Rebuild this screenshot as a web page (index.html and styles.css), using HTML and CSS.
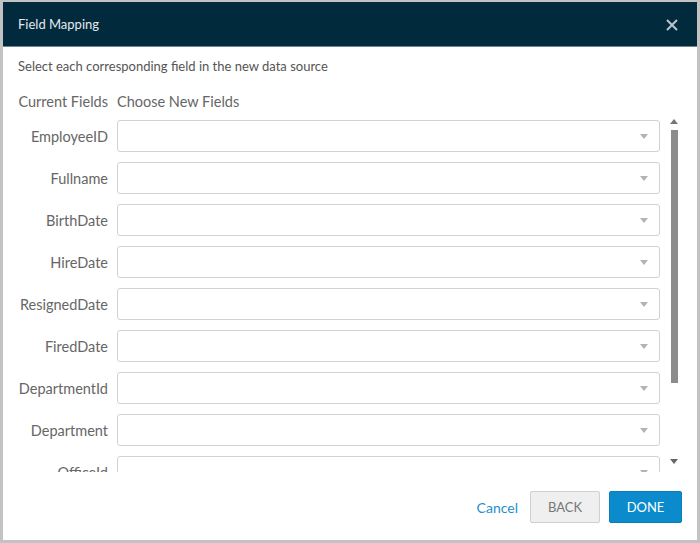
FILE: index.html
```html
<!DOCTYPE html>
<html>
<head>
<meta charset="utf-8">
<link rel="stylesheet" href="styles.css">
</head>
<body>
<div class="dialog">
  <div class="header">
    <span class="title">Field Mapping</span>
    <svg class="close" width="12" height="12" viewBox="0 0 12 12"><path d="M1 1L11 11M11 1L1 11" stroke="#b9c5cc" stroke-width="2" fill="none"/></svg>
  </div>
  <div class="content">
    <p class="desc">Select each corresponding field in the new data source</p>
    <div class="colheads">
      <span class="colhead-left">Current Fields</span>
      <span class="colhead-right">Choose New Fields</span>
    </div>
    <div class="listwrap">
      <div class="list">
        <div class="row"><span class="label">EmployeeID</span><div class="select"><span class="caret"></span></div></div>
        <div class="row"><span class="label">Fullname</span><div class="select"><span class="caret"></span></div></div>
        <div class="row"><span class="label">BirthDate</span><div class="select"><span class="caret"></span></div></div>
        <div class="row"><span class="label">HireDate</span><div class="select"><span class="caret"></span></div></div>
        <div class="row"><span class="label">ResignedDate</span><div class="select"><span class="caret"></span></div></div>
        <div class="row"><span class="label">FiredDate</span><div class="select"><span class="caret"></span></div></div>
        <div class="row"><span class="label">DepartmentId</span><div class="select"><span class="caret"></span></div></div>
        <div class="row"><span class="label">Department</span><div class="select"><span class="caret"></span></div></div>
        <div class="row"><span class="label">OfficeId</span><div class="select"><span class="caret"></span></div></div>
      </div>
      <div class="scrollbar">
        <span class="arrow-up"></span>
        <div class="track"><div class="thumb"></div></div>
        <span class="arrow-down"></span>
      </div>
    </div>
  </div>
  <div class="footer">
    <a class="cancel">Cancel</a>
    <button class="btn btn-back">BACK</button>
    <button class="btn btn-done">DONE</button>
  </div>
</div>
</body>
</html>
```
FILE: styles.css
```css
* { box-sizing: border-box; }
html, body { margin: 0; padding: 0; background: #fff; }
body { font-family: "Lato", "Open Sans", sans-serif; }

.dialog {
  width: 700px;
  height: 543px;
  border-style: solid;
  border-color: #c3c3c3;
  border-width: 2px 3px 3px 3px;
  display: flex;
  flex-direction: column;
  background: #fff;
}

.header {
  height: 45px;
  background: #022a3d;
  border-bottom: 1px solid #6f8491;
  display: flex;
  align-items: center;
  justify-content: space-between;
  padding: 0 19px 0 15px;
  flex-shrink: 0;
}
.title { color: #e3e9ec; font-size: 13px; }
.close { display: block; margin-top: 1px; }

.content {
  padding: 0 0 0 15px;
  display: flex;
  flex-direction: column;
}
.desc {
  margin: 11px 0 0 0;
  font-size: 13px;
  color: #555;
  line-height: 16px;
}
.colheads {
  display: flex;
  margin-top: 19px;
  font-size: 14.5px;
  color: #666;
  line-height: 18px;
}
.colhead-left { width: 90px; text-align: right; }
.colhead-right { margin-left: 9px; }

.listwrap {
  display: flex;
  margin-top: 6px;
  height: 355px;
}
.list {
  width: 645px;
  overflow: hidden;
  padding-top: 3px;
}
.row {
  display: flex;
  align-items: center;
  height: 32px;
  margin-bottom: 10px;
}
.label {
  width: 90px;
  text-align: right;
  font-size: 14.5px;
  color: #666;
  white-space: nowrap;
}
.select {
  margin-left: 9px;
  width: 543px;
  height: 32px;
  border: 1px solid #d2d2d2;
  border-radius: 3px;
  display: flex;
  align-items: center;
  justify-content: flex-end;
  padding-right: 11px;
}
.caret {
  width: 0; height: 0;
  border-left: 4px solid transparent;
  border-right: 4px solid transparent;
  border-top: 5px solid #b3b3b3;
}

.scrollbar {
  width: 14px;
  margin-left: 4px;
  display: flex;
  flex-direction: column;
  align-items: center;
  padding-top: 2px;
}
.arrow-up, .arrow-down {
  width: 0; height: 0;
  border-left: 4px solid transparent;
  border-right: 4px solid transparent;
}
.arrow-up { border-bottom: 5px solid #777; }
.arrow-down { border-top: 5px solid #666; }
.track {
  height: 335px;
  padding-top: 6px;
}
.thumb {
  width: 7px;
  height: 253px;
  background: #8c8c8c;
}

.footer {
  margin-top: auto;
  display: flex;
  justify-content: flex-end;
  align-items: center;
  padding: 0 15px 17px 0;
}
.cancel {
  color: #1f8fcb;
  font-size: 14px;
  margin-right: 12px;
}
.btn {
  height: 32px;
  font-family: "Lato", "Open Sans", sans-serif;
  font-size: 13px;
  border-radius: 2px;
  padding: 0;
}
.btn-back {
  width: 70px;
  background: #efefef;
  border: 1px solid #cfcfcf;
  color: #777;
  margin-right: 9px;
}
.btn-done {
  width: 73px;
  background: #0b8bcc;
  border: 1px solid #0a7fbb;
  color: #fff;
}
```
